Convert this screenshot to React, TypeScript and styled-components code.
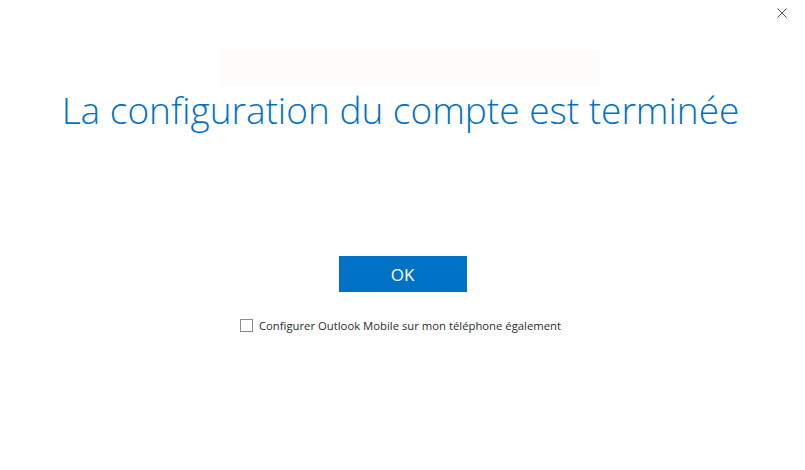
import styled, {createGlobalStyle} from 'styled-components';

const GlobalStyle = createGlobalStyle`
  html, body {
    margin: 0;
    padding: 0;
    background: #ffffff;
  }
  body {
    font-family: 'Open Sans', 'Liberation Sans', sans-serif;
  }
`;

const Window = styled.div`
  width: 805px;
  height: 470px;
  background: #ffffff;
  display: flex;
  flex-direction: column;
  align-items: center;
  position: relative;
  overflow: hidden;
`;

const CloseButton = styled.button`
  position: absolute;
  top: 6px;
  right: 16px;
  width: 14px;
  height: 14px;
  padding: 0;
  border: none;
  background: transparent;
  display: flex;
  align-items: center;
  justify-content: center;
  cursor: pointer;
`;

const Banner = styled.div`
  margin: 50px 0 0 15px;
  width: 380px;
  height: 36px;
  background: #fdfcfb;
`;

const Title = styled.h1`
  margin: -2px 4px 0 0;
  font-family: 'Open Sans', 'Liberation Sans', sans-serif;
  font-weight: 300;
  font-size: 37px;
  line-height: 52px;
  color: #0072c6;
  white-space: nowrap;
`;

const PrimaryButton = styled.button`
  margin-top: 120px;
  width: 128px;
  height: 36px;
  border: none;
  background: #0072c6;
  color: #ffffff;
  font-family: 'Open Sans', 'Liberation Sans', sans-serif;
  font-size: 17px;
  cursor: pointer;
`;

const OptionRow = styled.label`
  margin: 26px 4px 0 0;
  display: flex;
  align-items: center;
  gap: 6px;
  font-family: 'Open Sans', 'Liberation Sans', sans-serif;
  font-size: 11.3px;
  color: #2b2b2b;
  cursor: pointer;
`;

const Box = styled.span`
  width: 11px;
  height: 11px;
  border: 1px solid #8a8a8a;
  background: #ffffff;
`;

export default function App() {
  return (
    <>
      <GlobalStyle />
      <Window>
        <CloseButton aria-label="Fermer">
          <svg width="10" height="10" viewBox="0 0 10 10">
            <path d="M0.5 0.5L9.5 9.5M9.5 0.5L0.5 9.5" stroke="#555" strokeWidth="1" />
          </svg>
        </CloseButton>
        <Banner />
        <Title>La configuration du compte est terminée</Title>
        <PrimaryButton>OK</PrimaryButton>
        <OptionRow>
          <Box />
          Configurer Outlook Mobile sur mon téléphone également
        </OptionRow>
      </Window>
    </>
  );
}
